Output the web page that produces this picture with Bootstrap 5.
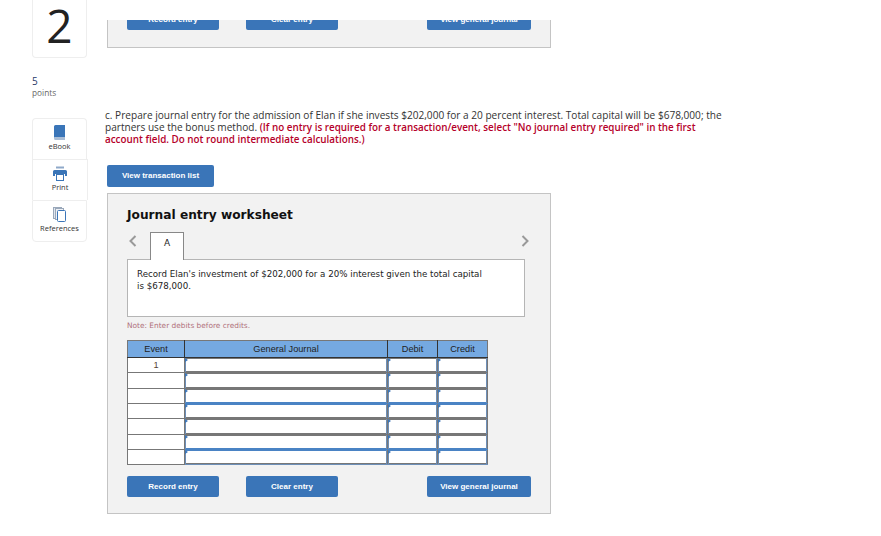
<!DOCTYPE html>
<html lang="en">
<head>
<meta charset="utf-8">
<title>Journal entry worksheet</title>
<link rel="stylesheet" href="https://cdn.jsdelivr.net/npm/bootstrap@5.3.0/dist/css/bootstrap.min.css">
<style>
html,body{height:536px;overflow:hidden;background:#fff}
body{font-family:"Open Sans",sans-serif;color:#333}
.side-col{width:55px;margin-left:32px;flex:none}
.main-col{width:620px;margin-left:18px;flex:none}
.num-card{height:58px;border:1px solid #eee;border-top:0;border-radius:0 0 4px 4px;font-size:46px;line-height:48px;font-weight:400;color:#222;text-align:center;padding-top:1px}
.pts-num{margin-top:17px;font-size:10px;line-height:12px;color:#1f3a68}
.pts-lbl{font-size:8.300px;line-height:11px;color:#666}
.tool-stack{margin-top:20px}
.tool-box{height:41px;border:1px solid #eee;border-bottom-width:0;font-size:7.500px;line-height:10px;color:#333;text-align:center;padding-top:6px}
.tool-box:first-child{border-radius:4px 4px 0 0}
.tool-box:nth-child(2){margin-right:-1px}
.tool-box:last-child{height:42px;border-bottom-width:1px;border-radius:0 0 4px 4px}
.tool-box svg{display:block;margin:0 auto 1px}
.top-gap{height:20px}
.clip-panel{height:28px;overflow:hidden;margin-left:2px;width:444px;background:#f2f2f2;border:1px solid #c4c4c4;border-top:0}
.clip-row{margin-top:-11px;padding-left:19px}
.task-text{margin-top:61px;font-size:10.100px;line-height:12px;color:#333}
.task-text b{color:#b5002a;font-weight:600;font-size:9.850px}
.blue-btn{background:#3a75b8;border:0;border-radius:2px;color:#fff;font-family:"Liberation Sans",sans-serif;font-size:8px;font-weight:700;height:21px;line-height:20px;padding:0;text-align:center}
.w-list{display:block;width:107px;height:22px;margin:20px 0 6px 2px}
.w-std{width:92px}
.w-view{width:104px}
.work-panel{margin-left:2px;width:444px;height:321px;background:#f2f2f2;border:1px solid #c4c4c4;padding:12px 19px 0}
.work-title{font-family:"DejaVu Sans",sans-serif;font-size:12.200px;line-height:18px;font-weight:700;color:#111;margin:0 0 8px}
.tab-line{height:27px;position:relative}
.tab-a{width:34px;height:28px;margin-left:23px;border:1px solid #888;border-bottom:0;background:#fff;font-family:"DejaVu Sans",sans-serif;font-size:9px;line-height:20px;text-align:center;color:#222;position:relative;z-index:1}
.chev{position:absolute;top:2px}
.chev-l{left:1px}
.chev-r{right:1px}
.rec-box{width:398px;height:58px;background:#fff;border:1px solid #b5b5b5;padding:8px 9px;font-family:"DejaVu Sans",sans-serif;font-size:8.700px;line-height:12px;color:#222}
.note-line{font-family:"DejaVu Sans",sans-serif;font-size:7.400px;line-height:10px;color:#b0707a;margin:4px 0 9px}
table.jr-table{width:360px;table-layout:fixed;border-collapse:collapse;margin:0 0 11px;background:#fff;font-family:"Liberation Sans",sans-serif;font-size:9.200px;color:#222;border:1px solid #777}
.c-ev{width:57px}.c-gj{width:203px}.c-db{width:50px}.c-cr{width:50px}
.jr-table th{background:#75a9e1;height:17px;padding:0;font-weight:400;text-align:center;border:1px solid #333;border-top-color:#777;line-height:15px}
.jr-table th:first-child{border-left-color:#777}
.jr-table th:last-child{border-right-color:#777}
.jr-table td{height:15.350px;padding:0;border:1px solid #777;text-align:center;line-height:13px;position:relative;color:#543}
.jr-table td.ent{background:#fff;box-shadow:inset 1px 0 #6d8fb8,inset -1px 0 #6d8fb8,inset 0 1px #777,inset 0 -1px #777}
.jr-table tr.blu td.ent{border-bottom-color:#4a83c4;box-shadow:inset 1px 0 #6d8fb8,inset -1px 0 #6d8fb8,inset 0 1px #777,inset 0 -1px #4a83c4}
.jr-table tr.blu + tr td.ent{box-shadow:inset 1px 0 #6d8fb8,inset -1px 0 #6d8fb8,inset 0 1px #4a83c4,inset 0 -1px #777}
.jr-table tr:last-child td.ent{border-bottom-color:#6d8fb8;box-shadow:inset 0 0 0 1px #5f8bbf}
.jr-table td.ent::before{content:"";position:absolute;left:0;top:0;border-left:3px solid #3a75b8;border-top:2px solid transparent;border-bottom:2px solid transparent}
.btn-line{display:flex}
.gap-a{width:27px}
.gap-b{width:89px}
</style>
</head>
<body>
<div class="d-flex">
  <div class="side-col">
    <div class="num-card">2</div>
    <div class="pts-num">5</div>
    <div class="pts-lbl">points</div>
    <div class="tool-stack">
      <div class="tool-box">
        <svg width="13" height="15" viewBox="0 0 13 15"><path d="M1 1.5A1.5 1.5 0 0 1 2.500 0H12v12H2.500A1.500 1.500 0 0 0 1 13.500z" fill="#3a75b8"/><path d="M1 13.500A1.500 1.500 0 0 1 2.500 12H12v3H2.500A1.500 1.500 0 0 1 1 13.500z" fill="#a9bdd6"/></svg>
        eBook
      </div>
      <div class="tool-box">
        <svg width="14" height="15" viewBox="0 0 14 15"><rect x="3" y="0.500" width="8" height="2" fill="#8fa9c9"/><path d="M1.500 4h11A1.500 1.500 0 0 1 14 5.500V10h-2V8H2v2H0V5.500A1.500 1.500 0 0 1 1.500 4z" fill="#3a75b8"/><rect x="3.500" y="8.500" width="7" height="6" fill="#fff" stroke="#3a75b8"/></svg>
        Print
      </div>
      <div class="tool-box">
        <svg width="13" height="15" viewBox="0 0 13 15"><rect x="0.500" y="0.500" width="8" height="11" fill="#dfe5ee" stroke="#9aa8ba"/><rect x="2.500" y="1.500" width="8" height="11" fill="#eef1f6" stroke="#9aa8ba"/><rect x="4.500" y="3.500" width="8" height="11" rx="1" fill="#fff" stroke="#3a75b8"/></svg>
        References
      </div>
    </div>
  </div>
  <div class="main-col">
    <div class="top-gap"></div>
    <div class="clip-panel">
      <div class="clip-row d-flex">
        <button class="blue-btn w-std">Record entry</button><span class="gap-a"></span>
        <button class="blue-btn w-std">Clear entry</button><span class="gap-b"></span>
        <button class="blue-btn w-view">View general journal</button>
      </div>
    </div>
    <p class="task-text mb-0">c. Prepare journal entry for the admission of Elan if she invests $202,000 for a 20 percent interest. Total capital will be $678,000; the partners use the bonus method. <b>(If no entry is required for a transaction/event, select "No journal entry required" in the first account field. Do not round intermediate calculations.)</b></p>
    <button class="blue-btn w-list">View transaction list</button>
    <div class="work-panel">
      <h5 class="work-title">Journal entry worksheet</h5>
      <div class="tab-line">
        <svg class="chev chev-l" width="10" height="14" viewBox="0 0 10 14"><path d="M7.500 2 2.500 7l5 5" fill="none" stroke="#999" stroke-width="2"/></svg>
        <div class="tab-a">A</div>
        <svg class="chev chev-r" width="10" height="14" viewBox="0 0 10 14"><path d="M2.500 2l5 5-5 5" fill="none" stroke="#999" stroke-width="2"/></svg>
      </div>
      <div class="rec-box">Record Elan's investment of $202,000 for a 20% interest given the total capital<br>is $678,000.</div>
      <p class="note-line">Note: Enter debits before credits.</p>
      <table class="jr-table">
        <colgroup><col class="c-ev"><col class="c-gj"><col class="c-db"><col class="c-cr"></colgroup>
        <thead><tr><th>Event</th><th>General Journal</th><th>Debit</th><th>Credit</th></tr></thead>
        <tbody>
          <tr><td>1</td><td class="ent"></td><td class="ent"></td><td class="ent"></td></tr>
          <tr><td></td><td class="ent"></td><td class="ent"></td><td class="ent"></td></tr>
          <tr class="blu"><td></td><td class="ent"></td><td class="ent"></td><td class="ent"></td></tr>
          <tr><td></td><td class="ent"></td><td class="ent"></td><td class="ent"></td></tr>
          <tr><td></td><td class="ent"></td><td class="ent"></td><td class="ent"></td></tr>
          <tr class="blu"><td></td><td class="ent"></td><td class="ent"></td><td class="ent"></td></tr>
          <tr><td></td><td class="ent"></td><td class="ent"></td><td class="ent"></td></tr>
        </tbody>
      </table>
      <div class="btn-line">
        <button class="blue-btn w-std">Record entry</button><span class="gap-a"></span>
        <button class="blue-btn w-std">Clear entry</button><span class="gap-b"></span>
        <button class="blue-btn w-view">View general journal</button>
      </div>
    </div>
  </div>
</div>
<script src="https://cdn.jsdelivr.net/npm/bootstrap@5.3.0/dist/js/bootstrap.bundle.min.js"></script>
</body>
</html>
